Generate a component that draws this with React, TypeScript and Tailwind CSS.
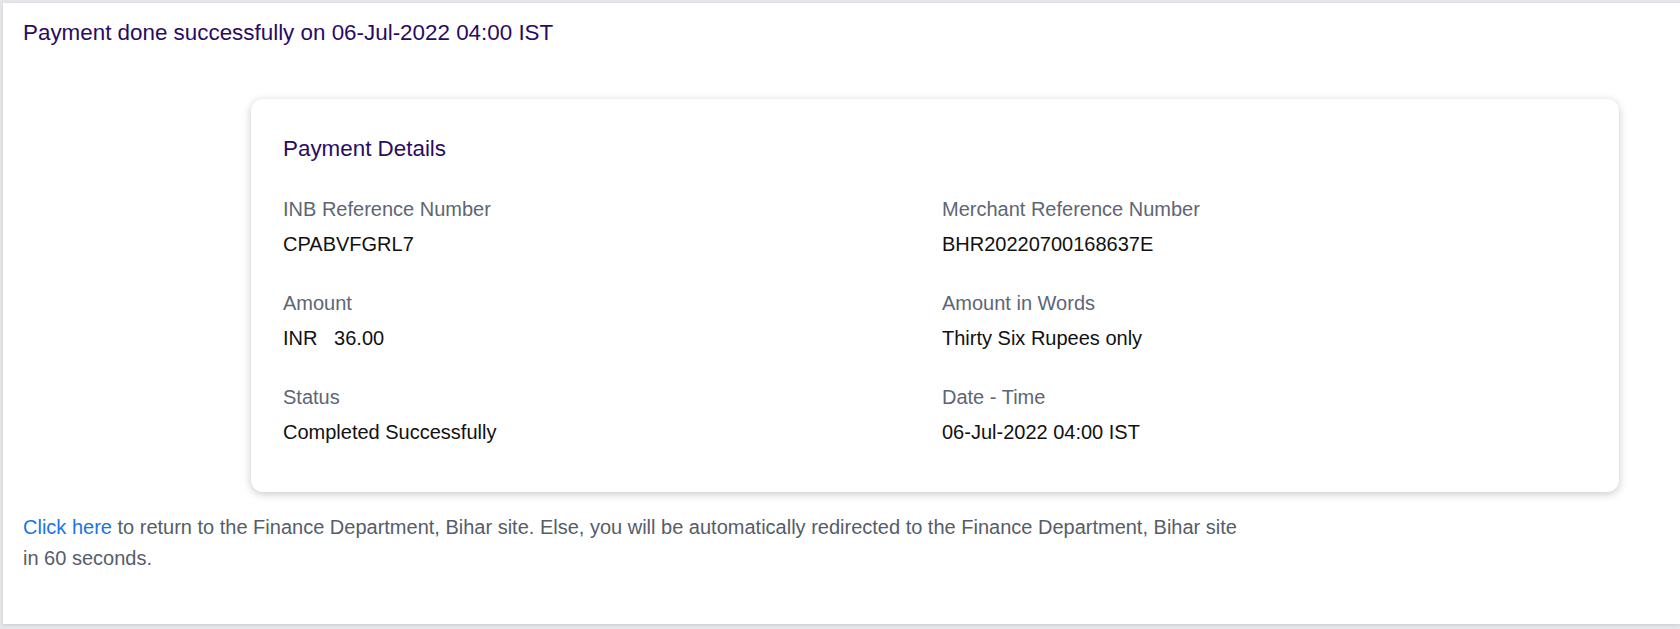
const rows = [
  [
    { label: "INB Reference Number", value: "CPABVFGRL7" },
    { label: "Merchant Reference Number", value: "BHR20220700168637E" },
  ],
  [
    { label: "Amount", value: "INR\u00a0\u00a0 36.00" },
    { label: "Amount in Words", value: "Thirty Six Rupees only" },
  ],
  [
    { label: "Status", value: "Completed Successfully" },
    { label: "Date - Time", value: "06-Jul-2022 04:00 IST" },
  ],
];

function Field({ label, value }: { label: string; value: string }) {
  return (
    <div>
      <div className="text-[20px] leading-[30px] text-[#5d6674]">{label}</div>
      <div className="mt-[5px] text-[20px] leading-[30px] text-[#111]">{value}</div>
    </div>
  );
}

export default function App() {
  return (
    <div className="min-h-[629px] bg-[#e4e6e9] pt-[3px] pl-[3px] font-['Liberation_Sans',Arial,sans-serif]">
      <div className="h-[621px] bg-white pl-[20px] pr-[60px] pt-[13px] shadow-[0_1px_3px_rgba(0,0,0,0.12)]">
        <h1 className="text-[22.4px] leading-[34px] text-[#2a0b63]">
          Payment done successfully on 06-Jul-2022 04:00 IST
        </h1>

        <div className="mt-[49px] ml-[228px] w-[1368px] rounded-[12px] bg-white px-[32px] pt-[33px] pb-[45px] shadow-[0_2px_8px_rgba(0,0,0,0.22)]">
          <h2 className="text-[22.4px] leading-[34px] text-[#2a0b63]">Payment Details</h2>
          <div className="mt-[28px] flex flex-col gap-[29px]">
            {rows.map((row, i) => (
              <div key={i} className="grid grid-cols-2 gap-x-[14px]">
                {row.map((f) => (
                  <Field key={f.label} label={f.label} value={f.value} />
                ))}
              </div>
            ))}
          </div>
        </div>

        <p className="mt-[20px] w-[1222px] text-[20px] leading-[31px] text-[#555d69]">
          <a href="#" className="text-[#1a73e8]">Click here</a> to return to the Finance Department, Bihar site. Else,
          you will be automatically redirected to the Finance Department, Bihar site in 60 seconds.
        </p>
      </div>
    </div>
  );
}
